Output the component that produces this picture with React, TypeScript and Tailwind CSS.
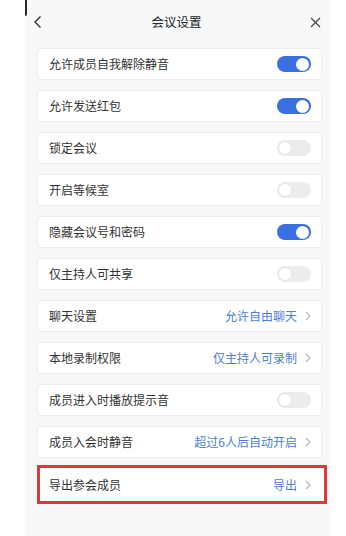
import React from 'react'

type Row =
  | { label: string; kind: 'toggle'; on: boolean }
  | { label: string; kind: 'link'; value: string; highlight?: boolean }

const rows: Row[] = [
  { label: '允许成员自我解除静音', kind: 'toggle', on: true },
  { label: '允许发送红包', kind: 'toggle', on: true },
  { label: '锁定会议', kind: 'toggle', on: false },
  { label: '开启等候室', kind: 'toggle', on: false },
  { label: '隐藏会议号和密码', kind: 'toggle', on: true },
  { label: '仅主持人可共享', kind: 'toggle', on: false },
  { label: '聊天设置', kind: 'link', value: '允许自由聊天' },
  { label: '本地录制权限', kind: 'link', value: '仅主持人可录制' },
  { label: '成员进入时播放提示音', kind: 'toggle', on: false },
  { label: '成员入会时静音', kind: 'link', value: '超过6人后自动开启' },
  { label: '导出参会成员', kind: 'link', value: '导出', highlight: true },
]

const Toggle: React.FC<{ on: boolean }> = ({ on }) =>
  on ? (
    <div className="flex h-[16px] w-[34px] items-center justify-end rounded-full bg-[#3a6fe0] pr-[2px]">
      <div className="h-[13px] w-[13px] rounded-full bg-white" />
    </div>
  ) : (
    <div className="flex h-[16px] w-[34px] items-center justify-start rounded-full bg-[#ececee] pl-[1px]">
      <div className="h-[14px] w-[14px] rounded-full border border-[#e4e4e6] bg-white" />
    </div>
  )

const Chevron = () => (
  <svg width="6" height="10" viewBox="0 0 6 10" className="ml-[8px]">
    <path d="M1 1l4 4-4 4" fill="none" stroke="#b4b7bd" strokeWidth="1.1" />
  </svg>
)

export default function App() {
  return (
    <div
      className="h-[536px] w-[346px] overflow-hidden bg-white"
      style={{ fontFamily: '"Noto Sans CJK SC", "Noto Sans", sans-serif' }}
    >
      <div className="relative ml-[25px] h-full w-[306px] bg-[#f7f8fa]">
        <div className="absolute left-0 top-0 h-[16px] w-[2px] rounded-br-full bg-[#2a2a2a]" />
        <header className="flex h-[44px] items-center justify-between pl-[8px] pr-[10px]">
          <svg width="10" height="14" viewBox="0 0 10 14">
            <path d="M7.5 1.5L2 7l5.5 5.5" fill="none" stroke="#333" strokeWidth="1.4" />
          </svg>
          <span className="text-[12.5px] text-[#222]">会议设置</span>
          <svg width="11" height="11" viewBox="0 0 11 11">
            <path d="M1 1l9 9M10 1l-9 9" fill="none" stroke="#444" strokeWidth="1.2" />
          </svg>
        </header>
        <div className="flex flex-col gap-[10px] pl-[12px] pr-[9px] pt-[4px]">
          {rows.map((r) =>
            r.kind === 'link' && r.highlight ? (
              <div
                key={r.label}
                className="-mt-[3px] -mr-[5px] border-[3px] border-[#d93a3b] bg-white"
              >
                <div className="flex h-[33px] items-center justify-between pl-[9px] pr-[13px]">
                  <span className="text-[12px] text-[#333]">{r.label}</span>
                  <div className="flex items-center">
                    <span className="text-[12px] text-[#4b80d8]">{r.value}</span>
                    <Chevron />
                  </div>
                </div>
              </div>
            ) : (
              <div
                key={r.label}
                className="flex h-[32px] items-center justify-between rounded-[3px] border border-[#ebedf0] bg-white pl-[11px] pr-[10px]"
              >
                <span className="text-[12px] text-[#333]">{r.label}</span>
                {r.kind === 'toggle' ? (
                  <Toggle on={r.on} />
                ) : (
                  <div className="flex items-center">
                    <span className="text-[12px] text-[#4b80d8]">{r.value}</span>
                    <Chevron />
                  </div>
                )}
              </div>
            )
          )}
        </div>
      </div>
    </div>
  )
}
